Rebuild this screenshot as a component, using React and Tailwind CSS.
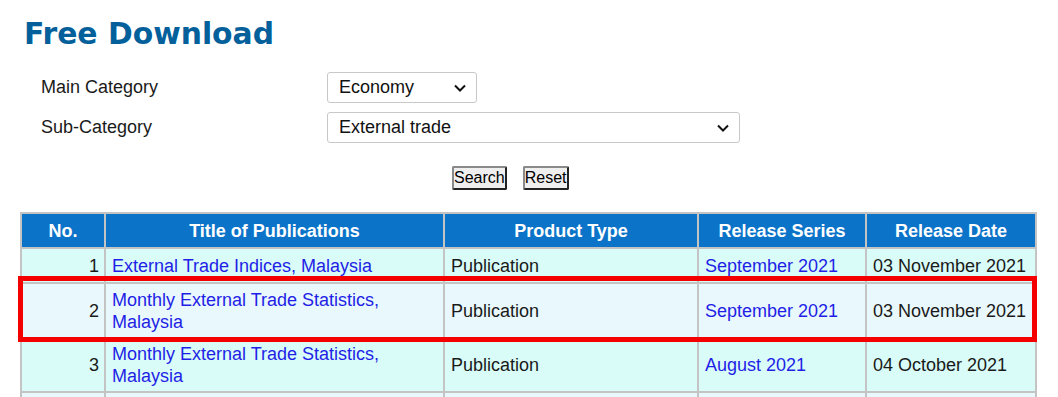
import React from "react";

const rows = [
  {
    no: 1,
    title: "External Trade Indices, Malaysia",
    type: "Publication",
    series: "September 2021",
    date: "03 November 2021",
    h: "h-[35px]",
    bg: "bg-[#d9fcf9]",
  },
  {
    no: 2,
    title: "Monthly External Trade Statistics, Malaysia",
    type: "Publication",
    series: "September 2021",
    date: "03 November 2021",
    h: "h-[55px]",
    bg: "bg-[#e9f8fc]",
  },
  {
    no: 3,
    title: "Monthly External Trade Statistics, Malaysia",
    type: "Publication",
    series: "August 2021",
    date: "04 October 2021",
    h: "h-[54px]",
    bg: "bg-[#d9fcf9]",
  },
];

function Select({ value, width }) {
  return (
    <div
      className={`${width} h-[31px] flex items-center justify-between pl-[11px] pr-[9px] border border-[#c8c8c8] rounded-[3px] bg-white text-[18px] text-[#111]`}
    >
      <span>{value}</span>
      <svg width="14" height="10" viewBox="0 0 14 10" fill="none">
        <path d="M2 2.5l5 5 5-5" stroke="#111" strokeWidth="2" />
      </svg>
    </div>
  );
}

export default function App() {
  return (
    <div className="w-[1058px] h-[397px] overflow-hidden bg-white font-['Liberation_Sans',Arial,sans-serif] text-[#1a1a1a]">
      <h1 className="pl-[24px] pt-[15px] h-[59px] text-[29.8px] leading-[38px] font-bold text-[#04609b] font-['DejaVu_Sans',Verdana,sans-serif]">
        Free Download
      </h1>

      <div className="grid grid-cols-[286px_auto] gap-y-[9px] pl-[41px] pt-[13px] text-[18px]">
        <div className="leading-[31px]">Main Category</div>
        <Select value="Economy" width="w-[150px]" />
        <div className="leading-[31px]">Sub-Category</div>
        <Select value="External trade" width="w-[413px]" />
      </div>

      <div className="flex gap-[16px] pl-[452px] pt-[23px] h-[69px] text-[16px]">
        <button className="h-[24px] px-0 leading-[18px] bg-[#efefef] border-2 border-t-[#8a8a8a] border-l-[#8a8a8a] border-b-[#222] border-r-[#222] rounded-[2px] text-black">
          Search
        </button>
        <button className="h-[24px] px-0 leading-[18px] bg-[#efefef] border-2 border-t-[#8a8a8a] border-l-[#8a8a8a] border-b-[#222] border-r-[#222] rounded-[2px] text-black">
          Reset
        </button>
      </div>

      <div className="relative ml-[20px] w-[1015px]">
        <table className="w-[1015px] border-collapse table-fixed text-[18px] leading-[22px]">
          <colgroup>
            <col className="w-[84px]" />
            <col className="w-[339px]" />
            <col className="w-[254px]" />
            <col className="w-[168px]" />
            <col className="w-[170px]" />
          </colgroup>
          <thead>
            <tr className="h-[35px] bg-[#0b74c9] text-white font-bold">
              <th className="border-2 border-[#c4c4c4] font-bold">No.</th>
              <th className="border-2 border-[#c4c4c4] font-bold">Title of Publications</th>
              <th className="border-2 border-[#c4c4c4] font-bold">Product Type</th>
              <th className="border-2 border-[#c4c4c4] font-bold">Release Series</th>
              <th className="border-2 border-[#c4c4c4] font-bold">Release Date</th>
            </tr>
          </thead>
          <tbody>
            {rows.map((r) => (
              <tr key={r.no} className={`${r.h} ${r.bg}`}>
                <td className="border-2 border-[#c4c4c4] text-right pr-[5px]">{r.no}</td>
                <td className="border-2 border-[#c4c4c4] pl-[6px] pr-[40px] text-[#1f1fe6]">{r.title}</td>
                <td className="border-2 border-[#c4c4c4] pl-[6px]">{r.type}</td>
                <td className="border-2 border-[#c4c4c4] pl-[6px] text-[#1f1fe6]">{r.series}</td>
                <td className="border-2 border-[#c4c4c4] pl-[6px] whitespace-nowrap">{r.date}</td>
              </tr>
            ))}
            <tr className="h-[54px] bg-[#e9f8fc]">
              <td className="border-2 border-[#c4c4c4]" />
              <td className="border-2 border-[#c4c4c4]" />
              <td className="border-2 border-[#c4c4c4]" />
              <td className="border-2 border-[#c4c4c4]" />
              <td className="border-2 border-[#c4c4c4]" />
            </tr>
          </tbody>
        </table>
        <div className="absolute left-[-2px] top-[64px] w-[1019px] h-[66px] border-[5px] border-[#f50000] pointer-events-none" />
      </div>
    </div>
  );
}
